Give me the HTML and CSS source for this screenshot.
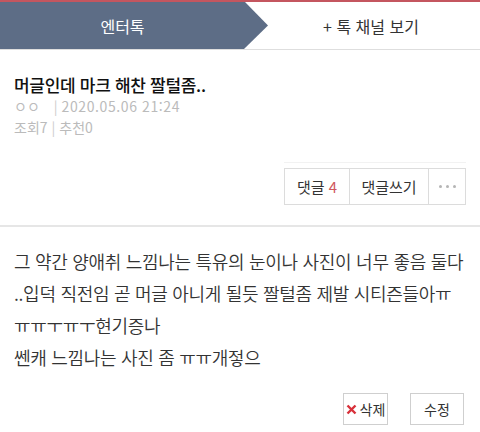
FILE: index.html
```html
<!doctype html>
<html lang="ko">

<head>
    <meta charset="UTF-8" />
    <meta name="viewport" content="width=device-width, initial-scale=1.0" />
    <title>엔터톡</title>
    <link rel="stylesheet" href="styles.css">
</head>

<body>

    <div class="tabs">
        <div class="tab tab-on">엔터톡</div>
        <div class="tab">+ 톡 채널 보기</div>
    </div>

    <div class="post-head">
        <h2 class="title">머글인데 마크 해찬 짤털좀..</h2>
        <div class="meta"><span class="nick">ㅇㅇ</span><span class="bar">|</span><span class="date">2020.05.06 21:24</span></div>
        <div class="meta">조회7<span class="bar">|</span>추천0</div>

        <div class="reply-wrap">
            <div class="reply-box">
                <span class="cell c1">댓글 <em>4</em></span>
                <span class="cell c2">댓글쓰기</span>
                <span class="cell c3">
                    <i class="dot"></i><i class="dot"></i><i class="dot"></i>
                </span>
            </div>
        </div>
    </div>

    <div class="post-body">
        <p>그 약간 양애취 느낌나는 특유의 눈이나 사진이 너무 좋음 둘다<br>..입덕 직전임 곧 머글 아니게 될듯 짤털좀 제발 시티즌들아ㅠ<br>ㅠㅠㅜㅠㅜ현기증나<br>쎈캐 느낌나는 사진 좀 ㅠㅠ개젛으</p>

        <div class="actions">
            <button class="btn btn-del">
                <svg width="11" height="11" viewBox="0 0 11 11">
                    <path d="M1.5 1.5 L9.5 9.5 M9.5 1.5 L1.5 9.5" stroke="#d8303a" stroke-width="2.4" />
                </svg>
                삭제
            </button>
            <button class="btn btn-edit">수정</button>
        </div>
    </div>

</body>

</html>
```

FILE: styles.css
```css
body {
    margin: 0;
    background: #fff;
    font-family: "Noto Sans CJK KR", "Noto Sans", sans-serif;
    color: #222;
}

.tabs {
    display: flex;
    height: 47px;
    border-top: 2px solid #c4565f;
    border-bottom: 1px solid #dedede;
}

.tab {
    flex: 1;
    display: flex;
    align-items: center;
    justify-content: center;
    font-size: 16px;
    color: #333;
    padding-right: 6px;
}

.tab-on {
    flex: 0 0 268px;
    padding-right: 23px;
    box-sizing: border-box;
    background: #5d6d86;
    color: #fff;
    clip-path: polygon(0 0, 245px 0, 268px 50%, 244px 100%, 0 100%);
}

.post-head {
    padding: 24px 14px 20px;
    border-bottom: 2px solid #e6e6e6;
}

.title {
    margin: 0;
    font-size: 17px;
    font-weight: 500;
    line-height: 22px;
    color: #111;
    letter-spacing: -0.3px;
}

.meta {
    font-size: 14px;
    line-height: 21px;
    color: #bbb;
}

.nick {
    margin-right: 10px;
}

.date {
    letter-spacing: 0.6px;
}

.bar {
    margin: 0 4px;
    color: #ccc;
}

.reply-wrap {
    margin: 24px 0 0 auto;
    width: 182px;
    border-top: 1px solid #f2f2f2;
    padding-top: 5px;
}

.reply-box {
    display: flex;
    height: 37px;
    box-sizing: border-box;
    border: 1px solid #dcdcdc;
}

.cell {
    display: flex;
    align-items: center;
    justify-content: center;
    font-size: 15px;
    color: #333;
}

.cell em {
    font-style: normal;
    color: #d0585e;
    margin-left: 4px;
}

.c1 {
    width: 64px;
    border-right: 1px solid #dcdcdc;
}

.c2 {
    width: 78px;
    border-right: 1px solid #dcdcdc;
}

.c3 {
    flex: 1;
    gap: 4px;
}

.dot {
    width: 3px;
    height: 3px;
    border-radius: 50%;
    background: #b5b5b5;
}

.post-body {
    padding: 18px 14px 0;
}

.post-body p {
    margin: 0;
    font-size: 18px;
    font-weight: 350;
    line-height: 32px;
    color: #333;
    letter-spacing: -0.3px;
    white-space: nowrap;
}

.actions {
    display: flex;
    justify-content: flex-end;
    gap: 22px;
    margin-top: 20px;
    padding-right: 2px;
}

.btn {
    display: flex;
    align-items: center;
    justify-content: center;
    gap: 3px;
    height: 32px;
    padding: 0;
    border: 1px solid #cfcfcf;
    background: #fff;
    font-family: inherit;
    font-size: 14px;
    color: #333;
}

.btn-del {
    width: 45px;
}

.btn-edit {
    width: 54px;
}
```
